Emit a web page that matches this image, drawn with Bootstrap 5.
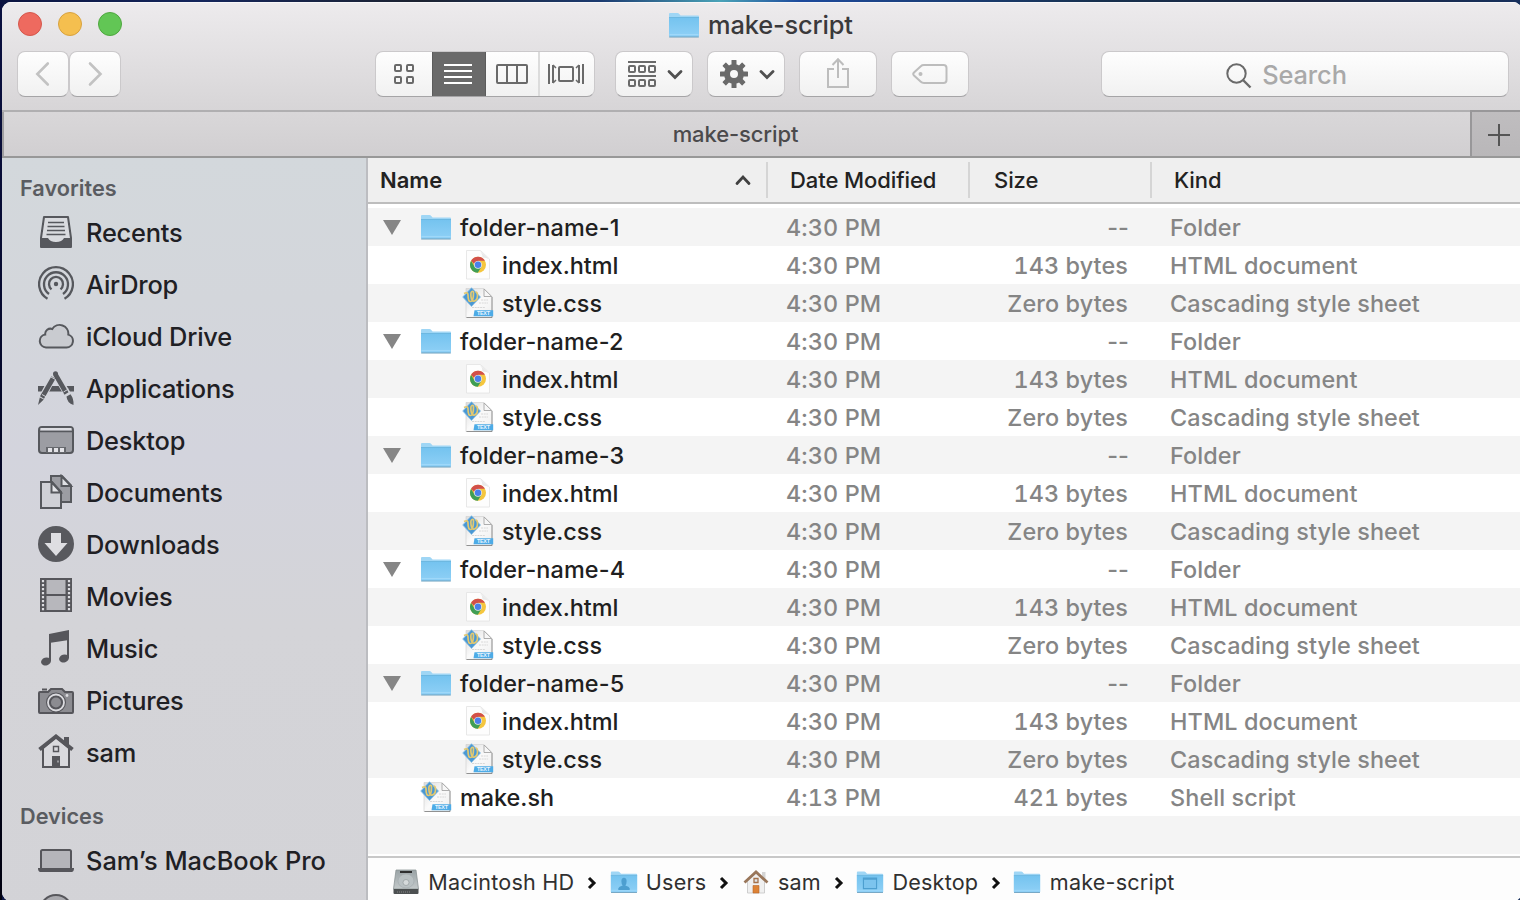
<!DOCTYPE html>
<html lang="en">
<head>
<meta charset="utf-8">
<meta name="viewport" content="width=device-width, initial-scale=1">
<title>make-script</title>
<link href="https://cdn.jsdelivr.net/npm/bootstrap@5.3.0/dist/css/bootstrap.min.css" rel="stylesheet">
<style>
  html, body { height: 900px; overflow: hidden; }
  body { background: linear-gradient(90deg, #0b1440 0, #14265c 200px, #1c2230 420px, #1b3a70 600px, #4aa3b8 720px, #1d4a9c 800px, #17304e 1100px, #1b2540 1300px, #17305c 1520px); font-family: Inter, "Liberation Sans", sans-serif; color: #222; line-height: 1; }
  .desk-edge { padding: 2px 0 0 2px; height: 900px; background: linear-gradient(#0a1040, #00000f) 0 2px / 2px 100% no-repeat; }
  .finder { width: 1520px; height: 899px; border-radius: 9px; overflow: hidden; background: #fff; }
  .titlebar { height: 108px; background: linear-gradient(#edebed, #d7d5d7); box-shadow: inset 0 1px #f8f7f8; }
  .dots { width: 366px; gap: 16px; padding: 10px 0 0 16px; }
  .dot { width: 24px; height: 24px; border-radius: 50%; border: 1px solid; }
  .dot-close { background: #ee6a5f; border-color: #d5574c; }
  .dot-min { background: #f5bf4f; border-color: #d8a23f; }
  .dot-max { background: #62c655; border-color: #4fa73f; }
  .title-line { height: 46px; }
  .title-text { font-size: 25.4px; color: #3a393b; font-weight: 450; letter-spacing: -.15px; }
  .tools { height: 46px; margin-top: 3px; }
  .tool { height: 46px; border-radius: 8px; background: linear-gradient(#fefefe, #f1f1f1); border: 1px solid #cbc9cb; border-bottom-color: #a5a4a6; padding: 0; display: flex; align-items: center; justify-content: center; }
  .tool svg, .seg svg { display: block; }
  .w-nav { width: 52px; }
  .w-std { width: 78px; }
  .views { width: 220px; overflow: hidden; justify-content: flex-start; align-items: stretch; margin-left: 254px; }
  .seg { display: flex; align-items: center; justify-content: center; }
  .seg-on { background: #6a6a6a; border: 1px solid #5c5c5c; margin: -1px 0; }
  .searchbox { width: 408px; margin-left: 132px; }
  .search-label { font-size: 25.4px; color: #a9a9a9; padding-top: 2px; font-weight: 450; letter-spacing: -.1px; }
  .tabs { height: 48px; border-top: 2px solid #b0afb1; border-bottom: 2px solid #989898; background: linear-gradient(#d9d7d9, #d1cfd1); }
  .tab-main { width: 1468px; border-left: 2px solid #a09fa1; font-size: 22px; color: #4b4a4c; font-weight: 450; letter-spacing: -.12px; padding-right: 3px; }
  .tab-add { width: 52px; margin-top: -2px; border-left: 2px solid #989799; border-top: 2px solid #989799; background: linear-gradient(#bfbdbf, #b9b7b9); padding: 2px 0 0 16px; }
  .side { width: 366px; border-right: 2px solid #bcbdc1; background: linear-gradient(#d3d8dc 0, #d3d6db 18%, #d3d4dd 38%, #d4d4d8 60%, #d3d3d7 100%); }
  .side-head { font-size: 21.7px; font-weight: 600; color: #5a5c61; padding-left: 18px; height: 48px; line-height: 60px; }
  .side-item { height: 52px; padding-left: 36px; gap: 12px; font-size: 25.4px; font-weight: 450; color: #1f2024; white-space: nowrap; letter-spacing: -.2px; }
  .side-item span { padding-top: 2px; }
  .side-item svg { width: 36px; height: 36px; flex: none; }
  .list-pane { width: 1154px; }
  .cols { display: grid; grid-template-columns: 400px 202px 182px 1fr; align-items: center; white-space: nowrap; }
  .cols-head { height: 46px; background: #efefef; border-bottom: 2px solid #bdbdbd; font-size: 22px; font-weight: 450; color: #222; letter-spacing: -.08px; }
  .cols-head > div { height: 36px; display: flex; align-items: center; border-right: 2px solid #d5d5d5; padding-left: 22px; }
  .cols-head > div:first-child { padding: 0 15px 0 12px; letter-spacing: 0; }
  .cols-head > div:nth-child(3) { padding-left: 24px; }
  .cols-head > div:last-child { border: 0; }
  .files { padding: 4px 0 2px; height: 654px; border-bottom: 2px solid #c8c8c8; }
  .file { height: 38px; font-size: 23.4px; color: #858585; font-weight: 450; }
  .file:nth-child(odd) { background: #f4f4f4; }
  .file .fname { color: #202020; display: flex; align-items: center; padding-left: 52px; gap: 8px; }
  .file .fname span, .fdate, .fsize, .fkind { padding-top: 2px; }
  .file .fname svg { flex: none; width: 32px; height: 32px; }
  .file .fname.kid { padding-left: 94px; }
  .file .fname.par { padding-left: 14px; letter-spacing: .13px; }
  .fname .tri { width: 20px !important; height: 16px !important; margin-right: 10px; }
  .fname .doc { overflow: visible; }
  .doc text { font: 700 5.4px "Liberation Sans", sans-serif; fill: #eaf6ff; }
  .fdate, .fsize { font-feature-settings: "tnum"; }
  .fdate { padding-left: 18px; letter-spacing: .12px; }
  .fsize { text-align: right; padding-right: 24px; letter-spacing: .1px; }
  .fsize.none { padding-right: 23px; font-feature-settings: normal; }
  .fkind { padding-left: 18px; letter-spacing: .1px; }
  .pathbar { height: 44px; padding: 5px 0 0 24px; font-size: 21.6px; color: #303030; background: #fdfdfd; white-space: nowrap; letter-spacing: .2px; }
  .crumb { display: flex; align-items: center; gap: 8.3px; }
  .crumb svg { width: 28px; height: 28px; margin-top: -1px; }
  .sep { margin: 0 12.3px 0 12.9px; }
</style>
</head>
<body>
<svg width="0" height="0" class="position-absolute" aria-hidden="true">
  <defs>
    <linearGradient id="fold" x1="0" y1="0" x2="0" y2="1"><stop offset="0" stop-color="#74c3ef"/><stop offset="1" stop-color="#8fd0f6"/></linearGradient>
    <linearGradient id="page" x1="0" y1="0" x2="1" y2="1"><stop offset="0" stop-color="#dcdcdc"/><stop offset=".5" stop-color="#fafafa"/><stop offset="1" stop-color="#eee"/></linearGradient>
    <linearGradient id="disk" x1="0" y1="0" x2="0" y2="1"><stop offset="0" stop-color="#9aa3a6"/><stop offset="1" stop-color="#c3c9ca"/></linearGradient>
  </defs>
  <symbol id="folder" viewBox="0 0 32 32">
    <path d="M1 27V5q0-1 1-1h7.500q.8 0 1.300.6L12.600 6.500H30q1 0 1 1V27z" fill="#9fd6f5"/>
    <path d="M1 8.500h30V27q0 1-1 1H2q-1 0-1-1z" fill="url(#fold)"/>
    <path d="M1 8.500h30" stroke="#66b3dc" stroke-width=".8"/>
    <path d="M1.500 25.500h29" stroke="#a5dbfa" stroke-width=".8"/>
    <path d="M1.200 28h29.600" stroke="#6b9fbd" stroke-width="1"/>
  </symbol>
  <symbol id="html" viewBox="0 0 32 32">
    <path d="M4.500 1.500h14l9 8.500V30H4.500z" fill="#fdfdfd" stroke="#e2e2e2" stroke-width=".8"/>
    <path d="M17.500 1.500 27.500 10.500q-3-2-7-2 0-4-3-7z" fill="#e9e9e9"/>
    <g transform="translate(-.2 -1.200)">
    <circle cx="16.200" cy="17" r="8" fill="#f5c63e"/>
    <path d="M9.270 13A8 8 0 0 0 16 25l3.700-6L16.200 17 12.600 18.700z" fill="#3f9e55"/>
    <path d="M16.200 9a8 8 0 0 1 6.930 4H16.200l-4 3L9.270 13A8 8 0 0 1 16.200 9z" fill="#d2504a"/>
    <circle cx="16.200" cy="17" r="3.900" fill="#e6e9f2"/><circle cx="16.200" cy="17" r="3.200" fill="#4a80ea"/>
    </g>
  </symbol>
  <symbol id="text" viewBox="0 0 32 32">
    <path d="M4 1.500h18L30 9.500V30.500H4z" fill="url(#page)" stroke="#cfcfcf" stroke-width=".6"/>
    <path d="M30 10V30.500H4.500" stroke="#888" stroke-width=".9" fill="none"/>
    <path d="M22 2 29.700 9.500H22z" fill="#f7f7f7" stroke="#a5a5a5" stroke-width=".9"/>
    <path d="M19 13h7M17 16h9M10 20.500h13" stroke="#d8d8d8" stroke-width="1" stroke-dasharray="2 .7"/>
    <path d="M9.500 .7 18.500 10 9.500 19.500 .7 10z" fill="#4a98d4" stroke="#8fc3e6" stroke-width=".8"/>
    <path d="M2 6.500q4-2 4 1.500 0 6.500 2.500 6.500 3 0 3-8.500 0-2-1.500-1.500-1.500.5-1 5 .5 5.500 3.500 4.500 3-1 3-5.500 0-3.500-2-3.500" fill="none" stroke="#e3c970" stroke-width="1.700"/>
    <path d="M12.500 23.300H31.200V29.300H11.500z" fill="#4dabe6"/>
  </symbol>
  <symbol id="tri" viewBox="0 0 20 16"><path d="M1 1h18l-9 15z" fill="#868686"/></symbol>
  <symbol id="next" viewBox="0 0 10 14"><path d="M2 2l5 5-5 5" fill="none" stroke="#111" stroke-width="3"/></symbol>
  <symbol id="chev" viewBox="0 0 16 12"><path d="M2 2.500l6 6 6-6" fill="none" stroke="#505050" stroke-width="2.800" stroke-linecap="round"/></symbol>
</svg>

<div class="desk-edge">
<div class="finder d-flex flex-column">
  <header class="titlebar flex-shrink-0">
    <div class="title-line d-flex">
      <div class="dots d-flex flex-shrink-0">
        <span class="dot dot-close"></span>
        <span class="dot dot-min"></span>
        <span class="dot dot-max"></span>
      </div>
      <div class="d-flex align-items-center" style="padding-left:300px;gap:8px">
        <svg width="32" height="32" class="d-block"><use href="#folder"/></svg>
        <span class="title-text">make-script</span>
      </div>
    </div>
    <div class="tools d-flex">
      <button class="tool w-nav" style="margin-left:15px" aria-label="Back"><svg width="16" height="26" viewBox="0 0 16 26"><path d="M12.800 2.500 2.300 13l10.500 10.500" fill="none" stroke="#c2c2c2" stroke-width="2.600" stroke-linecap="round"/></svg></button>
      <button class="tool w-nav" aria-label="Forward"><svg width="16" height="26" viewBox="0 0 16 26"><path d="M3 2.500 13.500 13 3 23.500" fill="none" stroke="#c2c2c2" stroke-width="2.600" stroke-linecap="round"/></svg></button>
      <div class="tool views">
        <div class="seg" style="width:56px"><svg width="20" height="20" viewBox="0 0 20 20" fill="none" stroke="#6a6a6a" stroke-width="2"><rect x="1" y="1" width="6" height="6" rx="1"/><rect x="13" y="1" width="6" height="6" rx="1"/><rect x="1" y="13" width="6" height="6" rx="1"/><rect x="13" y="13" width="6" height="6" rx="1"/></svg></div>
        <div class="seg seg-on pe-1" style="width:54px"><svg width="28" height="20" viewBox="0 0 28 20" style="margin-left:2px"><path d="M0 1h28M0 7h28M0 13h28M0 19h28" stroke="#fff" stroke-width="2"/></svg></div>
        <div class="seg" style="width:54px;border-right:2px solid #dcdcdc"><svg width="32" height="20" viewBox="0 0 32 20" fill="none" stroke="#6a6a6a" stroke-width="2"><rect x="1" y="1" width="30" height="18" rx="1"/><path d="M11 1v18M21 1v18"/></svg></div>
        <div class="seg" style="width:52px"><svg width="36" height="20" viewBox="0 0 36 20" fill="none" stroke="#6a6a6a" stroke-width="2"><rect x="11" y="3" width="14" height="14" rx="1"/><path d="M1 0v20M35 0v20M5 1v18M31 1v18"/><path d="M5 1l3 3M5 19l3-3M31 1l-3 3M31 19l-3-3" stroke-width="1.500"/></svg></div>
      </div>
      <button class="tool w-std" style="margin-left:20px" aria-label="Group"><svg width="58" height="28" viewBox="0 0 58 28"><g fill="none" stroke="#6a6a6a" stroke-width="2"><path d="M3 2h28M3 16h28"/><rect x="4" y="6" width="6" height="6" rx="1"/><rect x="14" y="6" width="6" height="6" rx="1"/><rect x="24" y="6" width="6" height="6" rx="1"/><rect x="4" y="20" width="6" height="6" rx="1"/><rect x="14" y="20" width="6" height="6" rx="1"/><rect x="24" y="20" width="6" height="6" rx="1"/></g><use href="#chev" x="42" y="9" width="16" height="12"/></svg></button>
      <button class="tool w-std" style="margin-left:14px" aria-label="Action"><svg width="58" height="28" viewBox="0 0 58 28"><g transform="translate(17 14)" fill="#6a6a6a"><circle r="7" fill="none" stroke="#6a6a6a" stroke-width="6"/><g id="teeth"><rect x="-2.500" y="-14" width="5" height="6" rx=".6"/><rect x="-2.500" y="8" width="5" height="6" rx=".6"/><rect x="-14" y="-2.500" width="6" height="5" rx=".6"/><rect x="8" y="-2.500" width="6" height="5" rx=".6"/></g><use href="#teeth" transform="rotate(45)"/></g><use href="#chev" x="42" y="9" width="16" height="12"/></svg></button>
      <button class="tool w-std" style="margin-left:14px" aria-label="Share"><svg width="24" height="32" viewBox="0 0 24 32" fill="none" stroke="#bdbdbd" stroke-width="2" style="margin-top:-3px"><path d="M8 12H2v18h20V12h-6M12 21V2M6.500 8 12 2.300 17.500 8"/></svg></button>
      <button class="tool w-std" style="margin-left:14px" aria-label="Tags"><svg width="36" height="20" viewBox="0 0 36 20" fill="none" stroke="#bdbdbd" stroke-width="2"><path d="M12 1H31.500q3 0 3 3V16q0 3-3 3H12q-2 0-3.200-1.200L2 11.500q-1.500-1.500 0-3L8.800 2.200Q10 1 12 1z"/><circle cx="8.500" cy="10" r="2" fill="#bdbdbd" stroke="none"/></svg></button>
      <div class="tool searchbox"><svg width="26" height="26" viewBox="0 0 26 26" fill="none" stroke="#6a6a6a" stroke-width="2" style="margin:3px 10px 0 -37px"><circle cx="10.500" cy="10.500" r="9.200"/><path d="M17 17l7.500 7.500" stroke-width="2.400"/></svg><span class="search-label">Search</span></div>
    </div>
  </header>

  <div class="tabs d-flex flex-shrink-0">
    <div class="tab-main d-flex align-items-center justify-content-center">make-script</div>
    <div class="tab-add d-flex align-items-center"><svg width="22" height="22" viewBox="0 0 22 22"><path d="M11 0v22M0 11h22" stroke="#555" stroke-width="2"/></svg></div>
  </div>

  <div class="d-flex flex-grow-1">
    <nav class="side flex-shrink-0">
      <div class="side-head">Favorites</div>
      <div class="side-item d-flex align-items-center"><svg viewBox="0 0 36 36"><path d="M6 3h24l3 21v9H3v-9z" fill="#d9dbdf" stroke="#56585d" stroke-width="2" stroke-linejoin="round"/><path d="M10 8.500h16M9.500 12.500h17M9 16.500h18M8.500 20.500h19" stroke="#56585d" stroke-width="1.600"/><path d="M3 24h7q2 4 8 4t8-4h7v9q0 1-1 1H4q-1 0-1-1z" fill="#56585d"/></svg><span>Recents</span></div>
      <div class="side-item d-flex align-items-center"><svg viewBox="0 0 36 36" fill="none" stroke="#56585d" stroke-width="2.300"><path d="M9.500 32.700A16.900 16.900 0 1 1 26.500 32.700"/><path d="M11 28A12 12 0 1 1 25 28"/><path d="M13.500 23.300A7 7 0 1 1 22.500 23.300"/><circle cx="18" cy="18" r="2.200" fill="#56585d" stroke="none"/></svg><span>AirDrop</span></div>
      <div class="side-item d-flex align-items-center"><svg viewBox="0 0 36 36"><path d="M8 29.500H28.500a6.600 6.600 0 0 0 1.800-12.900A8.700 8.700 0 0 0 14.300 11 5.300 5.300 0 0 0 7.200 16.600 6.500 6.500 0 0 0 8 29.500z" fill="#c9cbd0" stroke="#56585d" stroke-width="2"/></svg><span>iCloud Drive</span></div>
      <div class="side-item d-flex align-items-center"><svg viewBox="0 0 36 36"><path d="M0 16h36v5.500H0z" fill="#56585d"/><path d="M16.500 4 2 32M17 3 34 32" stroke="#d3d5db" stroke-width="7"/><path d="M15.500 7.500 4 27.500M17.500 4.500 28.500 23.500" stroke="#56585d" stroke-width="4.600"/><path d="M17.500 3.800v.1" stroke="#56585d" stroke-width="5" stroke-linecap="round"/><path d="M1.800 27.500 5.800 29.500 0 35z M28.500 26.500 32.500 24.300Q36 29 35.500 35 29 33 28.500 26.500z" fill="#56585d"/><path d="M13 7l4.500 2.500M4 24.500l4.500 2.500M25.500 22l5-3" stroke="#d3d5db" stroke-width="1"/></svg><span>Applications</span></div>
      <div class="side-item d-flex align-items-center"><svg viewBox="0 0 36 36"><rect x="1" y="5" width="34" height="26" rx="3" fill="#9c9da3" stroke="#56585d" stroke-width="2"/><path d="M2.500 6h31v2.500h-31z" fill="#dcdde2"/><path d="M1 9.500h34" stroke="#56585d" stroke-width="1.600"/><path d="M8 25h20v6H8z" fill="#66686d"/><path d="M10 26h4v4h-4zM16 26h4v4h-4zM22 26h4v4h-4z" fill="#e3e3e7"/></svg><span>Desktop</span></div>
      <div class="side-item d-flex align-items-center"><svg viewBox="0 0 36 36" stroke="#56585d" stroke-width="2"><path d="M13 2h11l9 9.500V28H13z" fill="#9c9da3"/><path d="M23.500 2v10H33z" fill="#dfe0e4"/><path d="M3 8h11l9 10v16H3z" fill="#cfd0d6"/><path d="M13.500 8v10.500H23z" fill="#e4e5e9"/></svg><span>Documents</span></div>
      <div class="side-item d-flex align-items-center"><svg viewBox="0 0 36 36"><circle cx="18" cy="18" r="18" fill="#58595e"/><path d="M13 7h10v10h6.500L18 30 6.500 17H13z" fill="#dedee2"/></svg><span>Downloads</span></div>
      <div class="side-item d-flex align-items-center"><svg viewBox="0 0 36 36"><path d="M2 0h32v34H2z" fill="#56565b"/><path d="M8.500 2h19v14h-19zM8.500 18h19v14h-19z" fill="#b7b7bc"/><path d="M5 2v31M31 2v31" stroke="#dcdce0" stroke-width="2.200" stroke-dasharray="2.200 1.800"/></svg><span>Movies</span></div>
      <div class="side-item d-flex align-items-center"><svg viewBox="0 0 36 36"><path d="M11 4 31 0V10L11 13z" fill="#56565b"/><path d="M12 6v25M30 4v24" stroke="#56565b" stroke-width="2"/><ellipse cx="8" cy="31.500" rx="5" ry="4" fill="#56565b" transform="rotate(-18 8 31.500)"/><ellipse cx="26" cy="28.500" rx="5" ry="4" fill="#56565b" transform="rotate(-18 26 28.500)"/></svg><span>Music</span></div>
      <div class="side-item d-flex align-items-center"><svg viewBox="0 0 36 36"><path d="M1 11q0-1 1-1h8l3-3h11l3 3h7q1 0 1 1v19q0 1-1 1H2q-1 0-1-1z" fill="#8c8c91" stroke="#56565b" stroke-width="2"/><path d="M4 7.500h5" stroke="#56565b" stroke-width="2"/><circle cx="18" cy="20.500" r="10" fill="#56565b"/><circle cx="18" cy="20.500" r="8" fill="none" stroke="#dcdce0" stroke-width="1.800"/><circle cx="18" cy="20.500" r="5" fill="#8c8c91"/><circle cx="29" cy="13.500" r="1.400" fill="#dcdce0"/></svg><span>Pictures</span></div>
      <div class="side-item d-flex align-items-center"><svg viewBox="0 0 36 36"><path d="M5 14 18 3l13 11v19H5z" fill="#d9d9dd" stroke="#56565b" stroke-width="2"/><path d="M26 3h5v9l-5-4z" fill="#56565b"/><path d="M1.500 15.500 18 2.500l16.500 13" fill="none" stroke="#56565b" stroke-width="4"/><path d="M15.500 12.500h5v5h-5z" fill="none" stroke="#56565b" stroke-width="1.400"/><path d="M14 22h8v12h-8z" fill="#56565b"/><path d="M20 26.500v2" stroke="#dcdce0"/></svg><span>sam</span></div>
      <div class="side-head" style="height:56px;line-height:76px">Devices</div>
      <div class="side-item d-flex align-items-center"><svg viewBox="0 0 36 36"><rect x="3" y="8" width="30" height="20" rx="1.500" fill="#b5b5ba" stroke="#56565b" stroke-width="2"/><path d="M0 26h36q0 4-2.500 4h-31Q0 30 0 26z" fill="#56565b"/></svg><span style="letter-spacing:0">Sam’s MacBook Pro</span></div>
      <div class="side-item d-flex align-items-center"><svg viewBox="0 0 36 36"><circle cx="18" cy="17" r="16" fill="#a9a9ae" stroke="#56565b" stroke-width="2"/></svg></div>
    </nav>

    <main class="list-pane">
      <div class="cols cols-head">
        <div><span class="fw-semibold me-auto">Name</span><svg width="16" height="12" viewBox="0 0 16 12"><path d="M2 9.500l6-6.500 6 6.500" fill="none" stroke="#404040" stroke-width="2.800" stroke-linecap="round"/></svg></div>
        <div>Date Modified</div><div>Size</div><div>Kind</div>
      </div>
      <div class="files">
        <div class="cols file"><div class="fname par"><svg class="tri"><use href="#tri"/></svg><svg><use href="#folder"/></svg><span>folder-name-1</span></div><div class="fdate">4:30 PM</div><div class="fsize none">--</div><div class="fkind">Folder</div></div>
        <div class="cols file"><div class="fname kid"><svg><use href="#html"/></svg><span>index.html</span></div><div class="fdate">4:30 PM</div><div class="fsize">143 bytes</div><div class="fkind">HTML document</div></div>
        <div class="cols file"><div class="fname kid"><svg class="doc" viewBox="0 0 32 32"><use href="#text"/><text x="15" y="28.400" textLength="13">TEXT</text></svg><span>style.css</span></div><div class="fdate">4:30 PM</div><div class="fsize">Zero bytes</div><div class="fkind">Cascading style sheet</div></div>
        <div class="cols file"><div class="fname par"><svg class="tri"><use href="#tri"/></svg><svg><use href="#folder"/></svg><span>folder-name-2</span></div><div class="fdate">4:30 PM</div><div class="fsize none">--</div><div class="fkind">Folder</div></div>
        <div class="cols file"><div class="fname kid"><svg><use href="#html"/></svg><span>index.html</span></div><div class="fdate">4:30 PM</div><div class="fsize">143 bytes</div><div class="fkind">HTML document</div></div>
        <div class="cols file"><div class="fname kid"><svg class="doc" viewBox="0 0 32 32"><use href="#text"/><text x="15" y="28.400" textLength="13">TEXT</text></svg><span>style.css</span></div><div class="fdate">4:30 PM</div><div class="fsize">Zero bytes</div><div class="fkind">Cascading style sheet</div></div>
        <div class="cols file"><div class="fname par"><svg class="tri"><use href="#tri"/></svg><svg><use href="#folder"/></svg><span>folder-name-3</span></div><div class="fdate">4:30 PM</div><div class="fsize none">--</div><div class="fkind">Folder</div></div>
        <div class="cols file"><div class="fname kid"><svg><use href="#html"/></svg><span>index.html</span></div><div class="fdate">4:30 PM</div><div class="fsize">143 bytes</div><div class="fkind">HTML document</div></div>
        <div class="cols file"><div class="fname kid"><svg class="doc" viewBox="0 0 32 32"><use href="#text"/><text x="15" y="28.400" textLength="13">TEXT</text></svg><span>style.css</span></div><div class="fdate">4:30 PM</div><div class="fsize">Zero bytes</div><div class="fkind">Cascading style sheet</div></div>
        <div class="cols file"><div class="fname par"><svg class="tri"><use href="#tri"/></svg><svg><use href="#folder"/></svg><span>folder-name-4</span></div><div class="fdate">4:30 PM</div><div class="fsize none">--</div><div class="fkind">Folder</div></div>
        <div class="cols file"><div class="fname kid"><svg><use href="#html"/></svg><span>index.html</span></div><div class="fdate">4:30 PM</div><div class="fsize">143 bytes</div><div class="fkind">HTML document</div></div>
        <div class="cols file"><div class="fname kid"><svg class="doc" viewBox="0 0 32 32"><use href="#text"/><text x="15" y="28.400" textLength="13">TEXT</text></svg><span>style.css</span></div><div class="fdate">4:30 PM</div><div class="fsize">Zero bytes</div><div class="fkind">Cascading style sheet</div></div>
        <div class="cols file"><div class="fname par"><svg class="tri"><use href="#tri"/></svg><svg><use href="#folder"/></svg><span>folder-name-5</span></div><div class="fdate">4:30 PM</div><div class="fsize none">--</div><div class="fkind">Folder</div></div>
        <div class="cols file"><div class="fname kid"><svg><use href="#html"/></svg><span>index.html</span></div><div class="fdate">4:30 PM</div><div class="fsize">143 bytes</div><div class="fkind">HTML document</div></div>
        <div class="cols file"><div class="fname kid"><svg class="doc" viewBox="0 0 32 32"><use href="#text"/><text x="15" y="28.400" textLength="13">TEXT</text></svg><span>style.css</span></div><div class="fdate">4:30 PM</div><div class="fsize">Zero bytes</div><div class="fkind">Cascading style sheet</div></div>
        <div class="cols file"><div class="fname"><svg class="doc" viewBox="0 0 32 32"><use href="#text"/><text x="15" y="28.400" textLength="13">TEXT</text></svg><span>make.sh</span></div><div class="fdate">4:13 PM</div><div class="fsize">421 bytes</div><div class="fkind">Shell script</div></div>
        <div class="cols file"></div>
      </div>
      <div class="pathbar d-flex align-items-center">
        <div class="crumb"><svg viewBox="0 0 28 28"><path d="M4 2h20l2.500 19H1.500z" fill="url(#disk)" stroke="#8c9496" stroke-width=".8"/><path d="M1.500 21h25v4q0 1-1 1h-23q-1 0-1-1z" fill="#4b4f50"/><path d="M8 4h12" stroke="#222" stroke-width="1.800"/><ellipse cx="14" cy="13" rx="8" ry="7" fill="#b9c1c3" stroke="#a2aaac" stroke-width=".6"/><circle cx="14" cy="14.500" r="3" fill="#d5dadb" stroke="#8c9496" stroke-width=".6"/><path d="M5 24h14" stroke="#888" stroke-dasharray="1 1"/></svg><span>Macintosh HD</span></div>
        <svg class="sep" width="10" height="14"><use href="#next"/></svg>
        <div class="crumb"><svg viewBox="0 0 32 32"><use href="#folder" width="32" height="32"/><path d="M9.500 25v-2q.5-1.500 5-3-1.500-2-1.500-5 0-4 3-4t3 4q0 3-1.500 5 4.500 1.500 5 3v2z" fill="#4d9fd0"/></svg><span>Users</span></div>
        <svg class="sep" width="10" height="14"><use href="#next"/></svg>
        <div class="crumb"><svg viewBox="0 0 28 28"><path d="M20 4h3.500v7l-3.500-3z" fill="#d5d5d5"/><path d="M5.500 13 14 5l8.500 8v12h-17z" fill="#f0f0f0" stroke="#c4c4c4" stroke-width=".8"/><path d="M2.500 14.500 14 4l11.500 10.500" fill="none" stroke="#99765a" stroke-width="2.800"/><path d="M12 10.500h4v4h-4z" fill="#dfe5ea" stroke="#a5714a" stroke-width="1.300"/><path d="M11 17.500h6V25h-6z" fill="#dd8235" stroke="#b5652a" stroke-width=".6"/></svg><span>sam</span></div>
        <svg class="sep" width="10" height="14"><use href="#next"/></svg>
        <div class="crumb"><svg viewBox="0 0 32 32"><use href="#folder" width="32" height="32"/><path d="M8.500 11.500h15v12h-15z" fill="#7cc4ee" stroke="#4d9fd0" stroke-width="1.300"/><path d="M8.500 12.500h15" stroke="#4d9fd0" stroke-width="1.800"/></svg><span>Desktop</span></div>
        <svg class="sep" width="10" height="14"><use href="#next"/></svg>
        <div class="crumb"><svg viewBox="0 0 32 32"><use href="#folder" width="32" height="32"/></svg><span>make-script</span></div>
      </div>
    </main>
  </div>
</div>
</div>
<script src="https://cdn.jsdelivr.net/npm/bootstrap@5.3.0/dist/js/bootstrap.bundle.min.js"></script>
</body>
</html>
